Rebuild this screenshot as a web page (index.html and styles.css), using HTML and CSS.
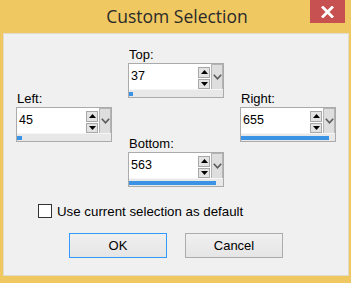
FILE: index.html
```html
<!DOCTYPE html>
<html>
<head>
<meta charset="utf-8">
<link rel="stylesheet" href="styles.css">
</head>
<body>
<div class="frame">
  <div class="titlebar">
    <span class="title">Custom Selection</span>
    <div class="close">
      <svg width="13" height="12" viewBox="0 0 13 12"><path d="M2 1.5 L11 10.5 M11 1.5 L2 10.5" stroke="#fff" stroke-width="2.8" stroke-linecap="square"/></svg>
    </div>
  </div>
  <div class="client">
    <div class="fields">
      <div class="col side">
        <div class="group">
          <div class="label">Left:</div>
          <div class="spin">
            <div class="spin-row">
              <div class="edit">45</div>
              <div class="arrows">
                <div class="arrow"><svg width="7" height="4" viewBox="0 0 7 4"><path d="M0 4 L3.5 0 L7 4Z" fill="#000"/></svg></div>
                <div class="arrow"><svg width="7" height="4" viewBox="0 0 7 4"><path d="M0 0 L3.5 4 L7 0Z" fill="#000"/></svg></div>
              </div>
              <div class="drop"><svg width="9" height="6" viewBox="0 0 9 6"><path d="M0.8 0.8 L4.5 4.8 L8.2 0.8" stroke="#5a5a5a" stroke-width="1.6" fill="none"/></svg></div>
            </div>
            <div class="bar"><div class="fill" style="width:5px"></div></div>
          </div>
        </div>
      </div>
      <div class="col mid">
        <div class="group">
          <div class="label">Top:</div>
          <div class="spin">
            <div class="spin-row">
              <div class="edit">37</div>
              <div class="arrows">
                <div class="arrow"><svg width="7" height="4" viewBox="0 0 7 4"><path d="M0 4 L3.5 0 L7 4Z" fill="#000"/></svg></div>
                <div class="arrow"><svg width="7" height="4" viewBox="0 0 7 4"><path d="M0 0 L3.5 4 L7 0Z" fill="#000"/></svg></div>
              </div>
              <div class="drop"><svg width="9" height="6" viewBox="0 0 9 6"><path d="M0.8 0.8 L4.5 4.8 L8.2 0.8" stroke="#5a5a5a" stroke-width="1.6" fill="none"/></svg></div>
            </div>
            <div class="bar"><div class="fill" style="width:4px"></div></div>
          </div>
        </div>
        <div class="group">
          <div class="label">Bottom:</div>
          <div class="spin">
            <div class="spin-row">
              <div class="edit">563</div>
              <div class="arrows">
                <div class="arrow"><svg width="7" height="4" viewBox="0 0 7 4"><path d="M0 4 L3.5 0 L7 4Z" fill="#000"/></svg></div>
                <div class="arrow"><svg width="7" height="4" viewBox="0 0 7 4"><path d="M0 0 L3.5 4 L7 0Z" fill="#000"/></svg></div>
              </div>
              <div class="drop"><svg width="9" height="6" viewBox="0 0 9 6"><path d="M0.8 0.8 L4.5 4.8 L8.2 0.8" stroke="#5a5a5a" stroke-width="1.6" fill="none"/></svg></div>
            </div>
            <div class="bar"><div class="fill" style="width:87px"></div></div>
          </div>
        </div>
      </div>
      <div class="col side">
        <div class="group">
          <div class="label">Right:</div>
          <div class="spin">
            <div class="spin-row">
              <div class="edit">655</div>
              <div class="arrows">
                <div class="arrow"><svg width="7" height="4" viewBox="0 0 7 4"><path d="M0 4 L3.5 0 L7 4Z" fill="#000"/></svg></div>
                <div class="arrow"><svg width="7" height="4" viewBox="0 0 7 4"><path d="M0 0 L3.5 4 L7 0Z" fill="#000"/></svg></div>
              </div>
              <div class="drop"><svg width="9" height="6" viewBox="0 0 9 6"><path d="M0.8 0.8 L4.5 4.8 L8.2 0.8" stroke="#5a5a5a" stroke-width="1.6" fill="none"/></svg></div>
            </div>
            <div class="bar"><div class="fill" style="width:88px"></div></div>
          </div>
        </div>
      </div>
    </div>
    <label class="check"><span class="box"></span><span>Use current selection as default</span></label>
    <div class="buttons">
      <div class="btn default">OK</div>
      <div class="btn">Cancel</div>
    </div>
  </div>
</div>
</body>
</html>
```
FILE: styles.css
```css
* { box-sizing: border-box; }
html, body { margin: 0; padding: 0; }
body {
  width: 351px;
  height: 283px;
  overflow: hidden;
  background: #f0c862;
  font-family: "Liberation Sans", Arial, sans-serif;
  font-size: 13px;
  color: #000;
}
.frame {
  width: 351px;
  height: 283px;
  background: #f0c862;
  padding: 0 2px 7px 3px;
  display: flex;
  flex-direction: column;
}
.titlebar {
  height: 33px;
  position: relative;
  display: flex;
  align-items: center;
  justify-content: center;
}
.title {
  font-family: "Open Sans", "Noto Sans", sans-serif;
  font-size: 17.5px;
  color: #2a2a2a;
  margin-top: -2px;
  margin-left: 2px;
}
.close {
  position: absolute;
  top: 0;
  right: 4px;
  width: 35px;
  height: 23px;
  background: #c75050;
  display: flex;
  align-items: center;
  justify-content: center;
}
.client {
  flex: 1;
  background: #f0f0f0;
  border: 1px solid #e2dccb;
  padding: 13px 0 0 12px;
}
.fields {
  display: flex;
  gap: 16px;
  height: 141px;
}
.col {
  width: 96px;
  display: flex;
  flex-direction: column;
}
.side { padding-top: 44px; }
.mid { gap: 38px; }
.label {
  height: 16px;
  line-height: 16px;
  padding-left: 1px;
}
.spin {
  width: 96px;
  height: 35px;
  border: 1px solid #ababab;
  background: #fff;
  display: flex;
  flex-direction: column;
}
.spin-row {
  height: 25px;
  display: flex;
}
.edit {
  flex: 1;
  font-size: 12.5px;
  line-height: 12px;
  padding: 6px 0 0 2px;
}
.arrows {
  width: 12px;
  display: flex;
  flex-direction: column;
  gap: 1px;
  padding-top: 3px;
  margin-right: 1px;
}
.arrow {
  height: 11px;
  background: #e3e3e3;
  border: 1px solid #a8a8a8;
  display: flex;
  align-items: center;
  justify-content: center;
}
.drop {
  width: 12px;
  height: 28px;
  background: #dedede;
  border: 1px solid #b4b4b4;
  display: flex;
  align-items: center;
  justify-content: center;
  padding-bottom: 2px;
}
.bar {
  margin-top: auto;
  height: 8px;
  background: #e8e8e8;
  border-top: 1px solid #f6f6f6;
  padding: 2px 4px 1px 0;
}
.fill {
  height: 100%;
  background: #3b93e6;
}
.check {
  display: flex;
  align-items: center;
  gap: 5px;
  margin: 15px 0 0 22px;
  height: 16px;
  font-size: 13.3px;
}
.box {
  width: 14px;
  height: 14px;
  border: 1px solid #333;
  background: #fff;
}
.buttons {
  display: flex;
  gap: 18px;
  margin: 14px 0 0 53px;
}
.btn {
  width: 98px;
  height: 25px;
  border: 1px solid #acacac;
  background: linear-gradient(#f0f0f0, #e5e5e5);
  display: flex;
  align-items: center;
  justify-content: center;
}
.btn.default { border-color: #3399ff; }
```
